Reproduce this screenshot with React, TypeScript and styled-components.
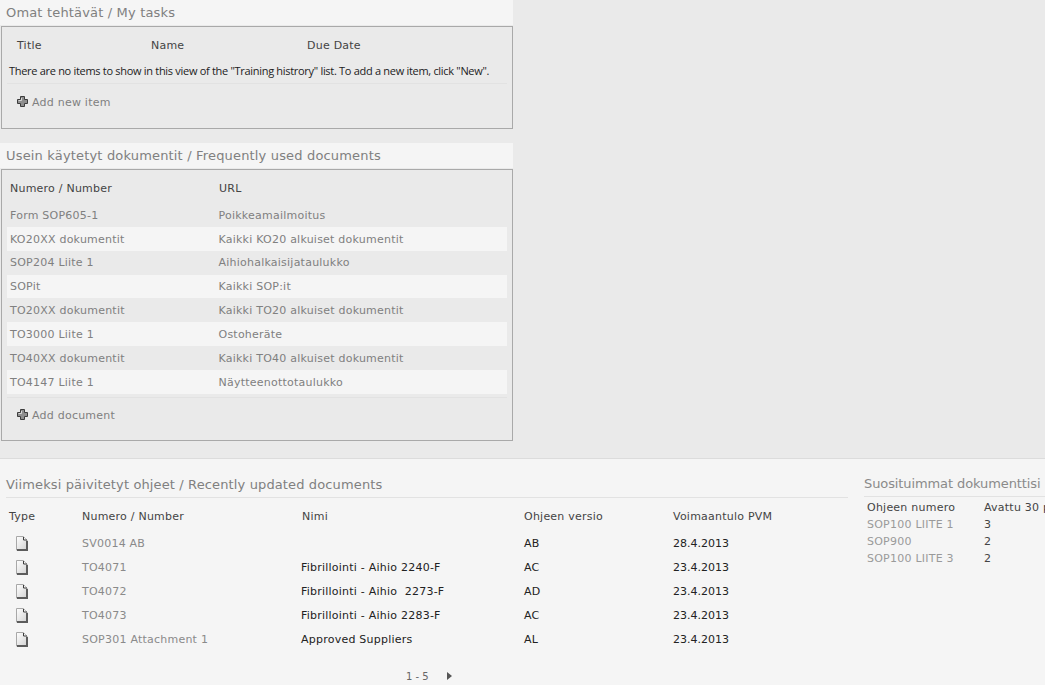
import React from 'react';
import styled, { createGlobalStyle } from 'styled-components';

const GlobalStyle = createGlobalStyle`
  html, body {
    margin: 0;
    padding: 0;
    width: 1045px;
    height: 685px;
    overflow: hidden;
    background: #f5f5f5;
  }
  body {
    font-family: "DejaVu Sans", Verdana, sans-serif;
    font-size: 11px;
    letter-spacing: 0.23px;
    color: #444;
  }
`;

const frequentDocs = [
  ['Form SOP605-1', 'Poikkeamailmoitus'],
  ['KO20XX dokumentit', 'Kaikki KO20 alkuiset dokumentit'],
  ['SOP204 Liite 1', 'Aihiohalkaisijataulukko'],
  ['SOPit', 'Kaikki SOP:it'],
  ['TO20XX dokumentit', 'Kaikki TO20 alkuiset dokumentit'],
  ['TO3000 Liite 1', 'Ostoheräte'],
  ['TO40XX dokumentit', 'Kaikki TO40 alkuiset dokumentit'],
  ['TO4147 Liite 1', 'Näytteenottotaulukko'],
];

const recentDocs = [
  ['SV0014 AB', '', 'AB', '28.4.2013'],
  ['TO4071', 'Fibrillointi - Aihio 2240-F', 'AC', '23.4.2013'],
  ['TO4072', 'Fibrillointi - Aihio\u00a0 2273-F', 'AD', '23.4.2013'],
  ['TO4073', 'Fibrillointi - Aihio 2283-F', 'AC', '23.4.2013'],
  ['SOP301 Attachment 1', 'Approved Suppliers', 'AL', '23.4.2013'],
];

const popularDocs = [
  ['SOP100 LIITE 1', '3'],
  ['SOP900', '2'],
  ['SOP100 LIITE 3', '2'],
];

const PlusIcon = () => (
  <PlusSvg width="11" height="11" viewBox="0 0 11 11">
    <path d="M3.5.5h4v3h3v4h-3v3h-4v-3h-3v-4h3z" fill="#8e8e8e" stroke="#3c3c3c" />
    <path d="M4.5 2v2.5h-3" fill="none" stroke="#d8d8d8" />
  </PlusSvg>
);

const DocIcon = () => (
  <svg width="12" height="15" viewBox="0 0 12 15">
    <defs>
      <linearGradient id="docFill" x1="0" y1="0" x2="1" y2="1">
        <stop offset="0" stopColor="#ffffff" />
        <stop offset="1" stopColor="#d2d2d2" />
      </linearGradient>
    </defs>
    <path d="M.5.5h7l3.5 3.5v10H.5z" fill="url(#docFill)" stroke="#a8a8a8" />
    <path d="M7.5 1v3H11" fill="#f4f4f4" stroke="#3c3c3c" />
    <path d="M1 14h10V5" fill="none" stroke="#5c5c5c" strokeWidth="2" />
  </svg>
);

const App = () => {
  return (
    <Page>
      <GlobalStyle />
      <TopArea>
        <LeftColumn>
          <WebPart>
            <PartTitle>Omat tehtävät / My tasks</PartTitle>
            <Panel $height={103}>
              <TaskHeader>
                <span>Title</span>
                <span>Name</span>
                <span>Due Date</span>
              </TaskHeader>
              <EmptyMessage>
                There are no items to show in this view of the "Training histrory" list. To add a new item, click "New".
              </EmptyMessage>
              <AddRow>
                <PlusIcon />
                Add new item
              </AddRow>
            </Panel>
          </WebPart>
          <WebPart>
            <PartTitle>Usein käytetyt dokumentit / Frequently used documents</PartTitle>
            <Panel $height={272}>
              <DocHeader>
                <span>Numero / Number</span>
                <span>URL</span>
              </DocHeader>
              {frequentDocs.map(([number, url], i) => (
                <DocRow key={number} $striped={i % 2 === 1}>
                  <span>{number}</span>
                  <span>{url}</span>
                </DocRow>
              ))}
              <DocFooter>
                <PlusIcon />
                Add document
              </DocFooter>
            </Panel>
          </WebPart>
        </LeftColumn>
      </TopArea>
      <BottomArea>
        <RecentColumn>
          <SectionTitle>Viimeksi päivitetyt ohjeet / Recently updated documents</SectionTitle>
          <RecentHeader>
            <HeaderCell $offset={1}>Type</HeaderCell>
            <HeaderCell>Numero / Number</HeaderCell>
            <HeaderCell>Nimi</HeaderCell>
            <HeaderCell>Ohjeen versio</HeaderCell>
            <HeaderCell>Voimaantulo PVM</HeaderCell>
          </RecentHeader>
          {recentDocs.map(([number, name, version, date]) => (
            <RecentRow key={number}>
              <IconCell>
                <DocIcon />
              </IconCell>
              <NumberCell>{number}</NumberCell>
              <NameCell>{name}</NameCell>
              <span>{version}</span>
              <DateCell>{date}</DateCell>
            </RecentRow>
          ))}
          <Pager>
            <span>1 - 5</span>
            <PagerArrow />
          </Pager>
        </RecentColumn>
        <PopularColumn>
          <PopularTitle>Suosituimmat dokumenttisi</PopularTitle>
          <PopularHeader>
            <span>Ohjeen numero</span>
            <span>Avattu 30 päivän aikana</span>
          </PopularHeader>
          {popularDocs.map(([number, count]) => (
            <PopularRow key={number}>
              <PopularNumber>{number}</PopularNumber>
              <span>{count}</span>
            </PopularRow>
          ))}
        </PopularColumn>
      </BottomArea>
    </Page>
  );
};

export default App;

const Page = styled.div`
  width: 1045px;
  height: 685px;
  overflow: hidden;
`;

const TopArea = styled.div`
  height: 458px;
  background: #eaeaea;
  border-bottom: 1px solid #dcdcdc;
`;

const LeftColumn = styled.div`
  width: 513px;
  display: flex;
  flex-direction: column;
  gap: 14px;
`;

const WebPart = styled.section``;

const PartTitle = styled.h2`
  margin: 0;
  height: 25px;
  padding-left: 6px;
  background: #f5f5f5;
  font-size: 13px;
  font-weight: normal;
  letter-spacing: 0.17px;
  line-height: 25px;
  color: #808080;
`;

const Panel = styled.div<{ $height: number }>`
  box-sizing: border-box;
  height: ${(p) => p.$height}px;
  margin: 1px 0 0 1px;
  padding: 0 5px;
  border: 1px solid #a9a9a9;
`;

const TaskHeader = styled.div`
  display: grid;
  grid-template-columns: 134px 156px 1fr;
  padding: 12px 0 0 10px;
  height: 22px;
  line-height: 14px;
`;

const EmptyMessage = styled.div`
  height: 22px;
  padding-left: 2px;
  border-bottom: 1px solid #e2e2e2;
  font-family: "Open Sans", "Noto Sans", sans-serif;
  font-size: 11px;
  line-height: 20px;
  color: #222;
  white-space: nowrap;
  letter-spacing: -0.3px;
`;

const AddRow = styled.div`
  display: flex;
  align-items: center;
  gap: 4px;
  height: 36px;
  padding-left: 10px;
  color: #808080;
`;

const DocFooter = styled(AddRow)`
  height: 34px;
  margin-top: 3px;
  padding-top: 2px;
  box-sizing: border-box;
  border-top: 1px solid #e2e2e2;
`;

const PlusSvg = styled.svg`
  flex: none;
  margin-top: -2px;
`;

const DocHeader = styled.div`
  display: grid;
  grid-template-columns: 209px 1fr;
  height: 33px;
  padding: 4px 3px 0;
  box-sizing: border-box;
  align-items: center;
`;

const DocRow = styled.div<{ $striped: boolean }>`
  display: grid;
  grid-template-columns: 208.5px 1fr;
  height: 23.85px;
  padding: 0.5px 3px 0;
  box-sizing: border-box;
  align-items: center;
  color: #808080;
  background: ${(p) => (p.$striped ? '#f5f5f5' : 'transparent')};
`;

const BottomArea = styled.div`
  display: flex;
  height: 226px;
`;

const RecentColumn = styled.div`
  width: 842px;
  margin-left: 6px;
`;

const SectionTitle = styled.h2`
  margin: 0;
  height: 39px;
  padding-top: 15px;
  box-sizing: border-box;
  border-bottom: 1px solid #e2e2e2;
  font-size: 13px;
  font-weight: normal;
  letter-spacing: 0.13px;
  line-height: 22px;
  color: #808080;
`;

const recentColumns = '74px 220px 222px 149px 1fr';

const RecentHeader = styled.div`
  display: grid;
  grid-template-columns: ${recentColumns};
  height: 33px;
  padding: 4px 0 0 2px;
  align-items: center;
  box-sizing: border-box;
`;

const HeaderCell = styled.span<{ $offset?: number }>`
  margin-left: ${(p) => p.$offset ?? 0}px;
`;

const RecentRow = styled.div`
  display: grid;
  grid-template-columns: ${recentColumns};
  height: 24px;
  padding-left: 2px;
  align-items: center;
  color: #222;
`;

const IconCell = styled.div`
  padding-left: 8px;
  display: flex;
`;

const NumberCell = styled.span`
  color: #8a8a8a;
`;

const NameCell = styled.span`
  margin-left: -1px;
`;

const DateCell = styled.span`
  letter-spacing: 0;
`;

const Pager = styled.div`
  display: flex;
  align-items: center;
  gap: 18px;
  margin: 18px 0 0 400px;
  height: 14px;
  font-size: 10px;
  letter-spacing: 0;
  color: #666;
`;

const PagerArrow = styled.span`
  width: 0;
  height: 0;
  border-left: 5px solid #555;
  border-top: 4px solid transparent;
  border-bottom: 4px solid transparent;
`;

const PopularColumn = styled.div`
  margin-left: 16px;
  width: 181px;
  overflow: hidden;
  white-space: nowrap;
`;

const PopularTitle = styled.h2`
  margin: 0;
  height: 38px;
  padding-top: 14px;
  box-sizing: border-box;
  border-bottom: 1px solid #e2e2e2;
  font-size: 13px;
  font-weight: normal;
  letter-spacing: -0.1px;
  line-height: 22px;
  color: #8a8a8a;
`;

const PopularHeader = styled.div`
  display: grid;
  grid-template-columns: 117px 1fr;
  height: 19px;
  padding: 1px 0 0 3px;
  box-sizing: border-box;
  align-items: center;
`;

const PopularRow = styled.div`
  display: grid;
  grid-template-columns: 117px 1fr;
  height: 17px;
  padding-left: 3px;
  align-items: center;
  color: #444;
`;

const PopularNumber = styled.span`
  color: #9a9a9a;
`;
